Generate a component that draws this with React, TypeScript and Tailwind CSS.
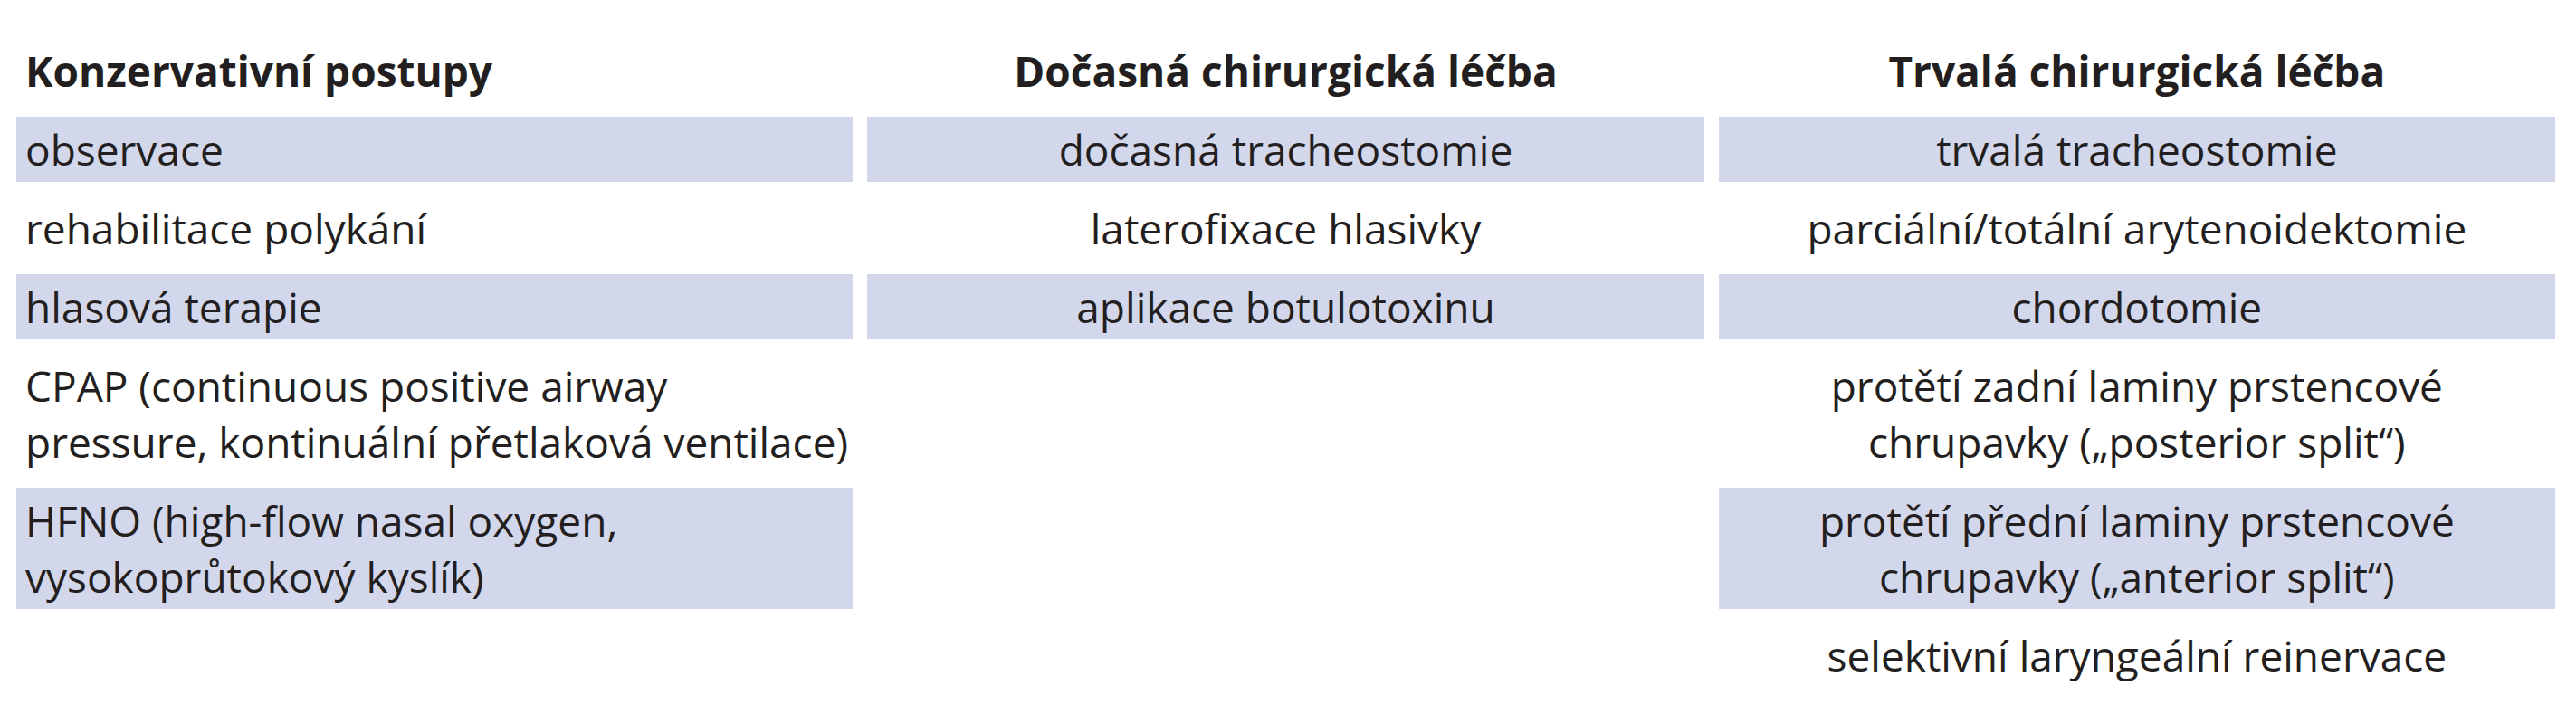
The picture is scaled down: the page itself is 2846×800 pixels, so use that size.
import React from "react";

type Cell = { lines: string[]; shaded: boolean } | null;

const rows: Cell[][] = [
  [
    { lines: ["observace"], shaded: true },
    { lines: ["dočasná tracheostomie"], shaded: true },
    { lines: ["trvalá tracheostomie"], shaded: true },
  ],
  [
    { lines: ["rehabilitace polykání"], shaded: false },
    { lines: ["laterofixace hlasivky"], shaded: false },
    { lines: ["parciální/totální arytenoidektomie"], shaded: false },
  ],
  [
    { lines: ["hlasová terapie"], shaded: true },
    { lines: ["aplikace botulotoxinu"], shaded: true },
    { lines: ["chordotomie"], shaded: true },
  ],
  [
    { lines: ["CPAP (continuous positive airway", "pressure, kontinuální přetlaková ventilace)"], shaded: false },
    null,
    { lines: ["protětí zadní laminy prstencové", "chrupavky („posterior split“)"], shaded: false },
  ],
  [
    { lines: ["HFNO (high-flow nasal oxygen,", "vysokoprůtokový kyslík)"], shaded: true },
    null,
    { lines: ["protětí přední laminy prstencové", "chrupavky („anterior split“)"], shaded: true },
  ],
  [
    null,
    null,
    { lines: ["selektivní laryngeální reinervace"], shaded: false },
  ],
];

function CellView({ cell, col }: { cell: Cell; col: number }) {
  if (!cell) return <div />;
  return (
    <div
      className={
        (cell.shaded ? "bg-[#d3d7ec] " : "") +
        (col === 0 ? "text-left " : "text-center ") +
        "px-[10px] py-[5px] leading-[62px] whitespace-nowrap"
      }
    >
      {cell.lines.map((l, i) => (
        <div key={i}>{l}</div>
      ))}
    </div>
  );
}

export default function App() {
  return (
    <div
      className="w-[2846px] h-[800px] bg-white text-[#231f20] text-[46px] pt-[42px] pl-[18px] pr-[23px]"
      style={{ fontFamily: '"Open Sans", "Noto Sans", sans-serif' }}
    >
      <div className="grid grid-cols-3 gap-x-4 gap-y-[15px]">
        <div className="px-[10px] py-[5px] leading-[62px] font-bold text-left">Konzervativní postupy</div>
        <div className="px-[10px] py-[5px] leading-[62px] font-bold text-center">Dočasná chirurgická léčba</div>
        <div className="px-[10px] py-[5px] leading-[62px] font-bold text-center">Trvalá chirurgická léčba</div>
        {rows.map((r, ri) =>
          r.map((c, ci) => <CellView key={ri + "-" + ci} cell={c} col={ci} />)
        )}
      </div>
    </div>
  );
}
